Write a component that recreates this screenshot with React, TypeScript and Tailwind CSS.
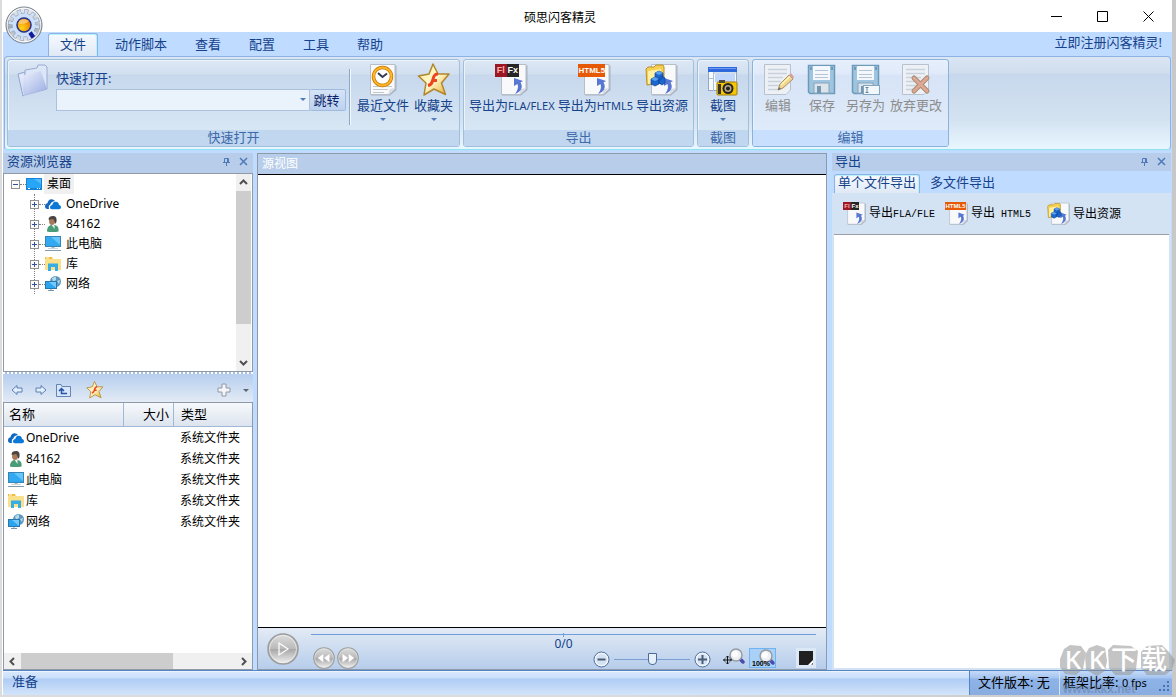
import React from "react";
import clsx from "clsx";

const UI = "font-['Noto_Sans','Noto_Sans_CJK_SC',sans-serif]";

/* ---------- small icons ---------- */

function OneDriveIcon() {
  return (
    <svg width="16" height="16" viewBox="0 0 16 16">
      <path d="M0 10.500C0 8.600 1 7.500 2.500 7.300C2.600 5 4.300 3.300 6.500 3.300C8 3.300 9.200 4 10 5.200C7.500 5 5.800 6.500 5.400 8.600C4 9 3.400 10.600 4 13H2.300C1 13 0 12 0 10.500Z" fill="#1068c2" />
      <path d="M5 11.500C5 10 6 9 7.300 9C7.600 7 9 5.800 10.800 5.800C12.600 5.800 13.800 7 14 8.900C15.300 9 16 10 16 11.200C16 12.500 15 13.200 14 13.200H6.800C5.700 13.200 5 12.500 5 11.500Z" fill="#0a78d7" />
    </svg>
  );
}

function UserIcon() {
  return (
    <svg width="16" height="16" viewBox="0 0 16 16">
      <path d="M2 15.500C2 11 4 9.500 7 8.500L10 9C13 10 14 12 13.500 15.500C10 16.500 5 16.500 2 15.500Z" fill="#4a9c78" />
      <path d="M6 8L9.500 13L9.500 8Z" fill="#eef3ef" />
      <ellipse cx="7" cy="5" rx="3" ry="4" fill="#a87a5a" />
      <path d="M3.500 3.500C3.500 1 5.500 0 8 0C11 0 12 2 11.500 6L10 8C9.500 6 9.500 4 8 3C6 3.500 4.500 4 3.500 3.500Z" fill="#4a4543" />
    </svg>
  );
}

function DesktopIcon() {
  return (
    <svg width="16" height="16" viewBox="0 0 16 16">
      <rect x="0" y="2" width="16" height="12" fill="#1683d8" />
      <rect x="1" y="3" width="14" height="9" fill="#27a5f7" />
      <path d="M8 3H15V8Z" fill="#53bbfb" />
      <path d="M2 12.500H4M11 12.500H12M13 12.500H14" stroke="#fff" />
    </svg>
  );
}

function ComputerIcon() {
  return (
    <svg width="16" height="16" viewBox="0 0 16 16">
      <rect x="0.500" y="0.500" width="15" height="10" fill="#31a8f0" stroke="#3784b5" />
      <path d="M6 1H15V9Z" fill="#66c5fa" />
      <path d="M8 11V13" stroke="#a5b5c4" strokeWidth="3" />
      <path d="M0 14.500H16" stroke="#8298ad" />
      <path d="M3 12.500H13" stroke="#cbd6df" />
    </svg>
  );
}

function LibraryIcon() {
  return (
    <svg width="16" height="16" viewBox="0 0 16 16">
      <path d="M0 1H7L8.500 3H16V14H0Z" fill="#fbe08c" />
      <path d="M0 1H7V3H0Z" fill="#f0bd3c" />
      <path d="M1 2H4" stroke="#fff" />
      <path d="M3 15V7.500H13V15H10V11H6V15Z" fill="#36aee5" />
    </svg>
  );
}

function NetworkIcon() {
  return (
    <svg width="16" height="16" viewBox="0 0 16 16">
      <circle cx="10.500" cy="5.500" r="5.500" fill="#5c97bd" />
      <path d="M7 2L11 0.500L11 4L8 6ZM12 5L15 4L14 8Z" fill="#b6d9ea" />
      <rect x="0.500" y="5.500" width="11" height="7" fill="#2ba4f0" stroke="#2878b0" />
      <path d="M4 6H11V12Z" fill="#71cafb" />
      <path d="M3 14.500H9M6 13V14" stroke="#7895ad" />
    </svg>
  );
}

function PinIcon() {
  return (
    <svg width="9" height="9" viewBox="0 0 9 9" fill="none" stroke="#4f79b8">
      <path d="M2.500 5.500V1.500H6.500V5.500M5.500 1.500V5M1 5.500H8M4.500 6V9" />
    </svg>
  );
}

function CloseIcon() {
  return (
    <svg width="9" height="9" viewBox="0 0 9 9" fill="none" stroke="#4f79b8" strokeWidth="1.500">
      <path d="M1 1L8 8M8 1L1 8" />
    </svg>
  );
}

function Chevron({ dir }: { dir: "up" | "down" | "left" | "right" }) {
  const d = {
    up: "M1 6L4.500 2.500L8 6",
    down: "M1 3L4.500 6.500L8 3",
    left: "M6 1L2.500 4.500L6 8",
    right: "M3 1L6.500 4.500L3 8",
  }[dir];
  return (
    <svg width="9" height="9" viewBox="0 0 9 9" fill="none" stroke="#505050" strokeWidth="2">
      <path d={d} />
    </svg>
  );
}

function Caret({ color = "#4f79b8" }: { color?: string }) {
  return (
    <svg width="6" height="3" viewBox="0 0 6 3">
      <path d="M0 0H6L3 3Z" fill={color} />
    </svg>
  );
}

/* ---------- ribbon icons ---------- */

function LogoIcon() {
  return (
    <svg width="38" height="38" viewBox="0 0 38 38">
      <defs>
        <linearGradient id="orb" x1="0" y1="0" x2="0" y2="1">
          <stop offset="0" stopColor="#eceef0" />
          <stop offset="0.450" stopColor="#c3c8ce" />
          <stop offset="0.550" stopColor="#9fa6af" />
          <stop offset="1" stopColor="#eef1f4" />
        </linearGradient>
        <radialGradient id="amber" cx="0.350" cy="0.700" r="0.700">
          <stop offset="0" stopColor="#ffd61a" />
          <stop offset="1" stopColor="#f07a00" />
        </radialGradient>
      </defs>
      <circle cx="19" cy="19" r="18" fill="url(#orb)" stroke="#747b84" />
      <circle cx="19" cy="19" r="16.800" fill="none" stroke="#fff" opacity="0.800" />
      {/* gear: twelve teeth round a solid ring */}
      <circle cx="19" cy="19" r="13" fill="none" stroke="#8794a6" strokeWidth="6" strokeDasharray="3.600 3.207" />
      <circle cx="19" cy="19" r="9.500" fill="none" stroke="#8794a6" strokeWidth="5" />
      <circle cx="19" cy="19" r="12.500" fill="none" stroke="#cde0fa" strokeWidth="6" strokeDasharray="2.800 3.745" strokeDashoffset="-0.300" />
      <circle cx="19" cy="19" r="9.500" fill="none" stroke="#cde0fa" strokeWidth="4" />
      <circle cx="19" cy="19" r="7" fill="url(#amber)" stroke="#26348c" strokeWidth="1.500" />
      <path d="M14 15C16 12.500 21 12.500 24 15C21 18 17 18 14 18Z" fill="#ffe0a0" opacity="0.600" />
      <path d="M25 26.500L28.500 31.500" stroke="#101c9c" strokeWidth="4" />
    </svg>
  );
}

function OpenFolderIcon() {
  return (
    <svg width="32" height="34" viewBox="0 0 32 34">
      <defs>
        <linearGradient id="fold" x1="0" y1="0" x2="1" y2="1">
          <stop offset="0" stopColor="#f4f7ff" />
          <stop offset="1" stopColor="#8fa3de" />
        </linearGradient>
      </defs>
      <path d="M1 10L8 8L9 30L6 32Z" fill="#dce6f8" stroke="#92a5d0" />
      <path d="M8 6L20 4L21 1L28 1L30 3V25L8 31Z" fill="#dde6f7" stroke="#9aabd0" />
      <path d="M3 12L24 7L30 25L7 32Z" fill="url(#fold)" opacity="0.900" />
    </svg>
  );
}

function PaperShape({ x = 3 }: { x?: number }) {
  return (
    <g transform={`translate(${x} 0)`}>
      <path d="M1 1.500H26.500V26L20 31.500H1Z" fill="#8f99a6" opacity="0.600" />
      <path d="M0.500 0.500H25V25L19 30.500H0.500Z" fill="#f8f9fb" stroke="#b7bec8" />
      <path d="M25 24L18 30.500L20 25Z" fill="#d6dbe1" />
    </g>
  );
}

function RecentIcon() {
  return (
    <svg width="32" height="32" viewBox="0 0 32 32">
      <PaperShape />
      <path d="M6 25.500H21M6 28.500H17M6 22.500H25" stroke="#c2c7ce" />
      <circle cx="15.500" cy="12.500" r="9" fill="#fff" stroke="#c87800" strokeWidth="3.500" />
      <circle cx="15.500" cy="12.500" r="9" fill="none" stroke="#ffb727" strokeWidth="2" />
      <path d="M11 9L15.500 13L20 9.500" fill="none" stroke="#333c55" strokeWidth="2" />
    </svg>
  );
}

function StarIcon({ size = 34 }: { size?: number }) {
  return (
    <svg width={size} height={size} viewBox="0 0 34 34">
      <defs>
        <linearGradient id="gold" x1="0" y1="0" x2="1" y2="1">
          <stop offset="0" stopColor="#ffe98a" />
          <stop offset="0.500" stopColor="#fff8cf" />
          <stop offset="1" stopColor="#e9a91f" />
        </linearGradient>
      </defs>
      <path d="M16 1L21 11L32 11L24.500 20L28.500 31.500L17 26L7 32L9 20L1.500 13L12 11Z" fill="url(#gold)" stroke="#b08630" strokeWidth="1.500" strokeLinejoin="round" />
      <path d="M21 11C17 11 16.500 14 15.500 18C14.800 20.500 13.500 22 11 22.500M15 17.500H20" fill="none" stroke="#ee431f" strokeWidth="3" />
    </svg>
  );
}

function BlueArrow() {
  return <path d="M20 30C23 26 23.500 23 22.500 20L19 22V14L28 17L25.500 18.500C28.500 23 26 28 20 30Z" fill="#5877d2" />;
}

function ExportPage() {
  return (
    <>
      <PaperShape x={6} />
      <BlueArrow />
    </>
  );
}

function FlaIcon({ small = false }: { small?: boolean }) {
  return (
    <span className="relative block">
      <svg width={small ? 24 : 34} height={small ? 24 : 32} viewBox="0 0 34 32">
        <ExportPage />
      </svg>
      <span
        className={clsx(
          "absolute left-0 top-0 flex font-['Liberation_Sans',sans-serif] font-bold text-white",
          small ? "text-[6px] leading-[8px]" : "text-[9px] leading-[13px]"
        )}
      >
        <span className={clsx("bg-[#9c1724] text-center text-[#ffb0a8]", small ? "w-2" : "w-3")}>Fl</span>
        <span className={clsx("bg-[#262626] text-center", small ? "w-2" : "w-3")}>Fx</span>
      </span>
    </span>
  );
}

function HtmlIcon({ small = false }: { small?: boolean }) {
  return (
    <span className="relative block">
      <svg width={small ? 24 : 34} height={small ? 24 : 32} viewBox="0 0 34 32">
        <ExportPage />
      </svg>
      <span
        className={clsx(
          "absolute left-0 top-0 flex justify-center bg-[#e65a05] font-['Liberation_Sans',sans-serif] font-bold text-white",
          small ? "w-[21px] text-[6px] leading-[8px]" : "w-[27px] text-[8px] leading-[13px]"
        )}
      >
        HTML5
      </span>
    </span>
  );
}

function ResourceIcon({ small = false }: { small?: boolean }) {
  return (
    <svg width={small ? 24 : 34} height={small ? 24 : 32} viewBox="0 0 34 32">
      <ExportPage />
      <path d="M1 5L3 3H9L11 1H18L19 3V19L2 21Z" fill="#f4cf52" stroke="#b9912a" />
      <path d="M3 7L16 5V18L3 20Z" fill="#fff0a2" />
      <path d="M10 9L14 7L18 9V14L14 16L10 14ZM6 15L10 13L14 15V20L10 22L6 20ZM14 14L17 12L20 14V19L17 21L14 19Z" fill="#1c66cd" stroke="#0a459f" strokeWidth="0.700" />
      <path d="M10 9L14 7L18 9L14 11ZM6 15L10 13L14 15L10 17Z" fill="#5aa2ef" />
    </svg>
  );
}

function CaptureIcon() {
  return (
    <svg width="34" height="32" viewBox="0 0 34 32">
      <rect x="2.500" y="3.500" width="28" height="23" fill="#f6fbff" stroke="#9ba6ba" />
      <rect x="2" y="3" width="29" height="5" fill="#2d68dc" />
      <path d="M3 4.500H30" stroke="#719bf0" />
      <path d="M3 14.500H8M7.500 8V27M8 9H30" stroke="#aec0d8" />
      <rect x="9" y="10" width="20" height="8" fill="#c0d6fa" />
      <rect x="11" y="18" width="20" height="13" rx="1" fill="#f6c704" stroke="#a17c0e" />
      <rect x="13" y="16" width="6" height="3" fill="#4e4938" />
      <path d="M12 20H15V30H12Z" fill="#3a352a" />
      <circle cx="22" cy="24.500" r="5.500" fill="#27231d" />
      <circle cx="22" cy="24.500" r="3.500" fill="#b8a98a" />
      <circle cx="22" cy="24.500" r="2" fill="#222" />
    </svg>
  );
}

function TextPage() {
  return (
    <>
      <path d="M3.500 0.500H29.500V26L25 30.500H3.500Z" fill="#edf1f6" stroke="#b7c2ce" />
      <path d="M7 5.500H26M7 9.500H26M7 13.500H22M7 17.500H20M7 21.500H18M7 25.500H18" stroke="#c9d2dc" strokeWidth="1.500" />
    </>
  );
}

function EditIcon() {
  return (
    <svg width="34" height="32" viewBox="0 0 34 32">
      <TextPage />
      <path d="M17 26L19 20L28 11L32 15L22 24Z" fill="#f0d690" stroke="#a99263" />
      <path d="M28 11L30 9L33 13L32 15Z" fill="#d8a0a0" />
      <path d="M17 26L18 23L20 25Z" fill="#686868" />
      <path d="M20 21L29 12.500" stroke="#fff3bc" strokeWidth="1.500" />
    </svg>
  );
}

function SaveIcon({ as = false }: { as?: boolean }) {
  return (
    <svg width="32" height="32" viewBox="0 0 32 32">
      <path d="M2.500 1.500H28.500V29.500H4L2.500 28Z" fill="#9fc4e0" stroke="#6e9ab9" strokeWidth="1.500" />
      <rect x="7" y="2" width="17" height="14" fill="#f4f8fc" />
      <path d="M9 6.500H22M9 10.500H22M9 13.500H22" stroke="#b3c5d4" />
      <path d="M4 3H6V6H4ZM25 3H27V6H25Z" fill="#6e9ab9" />
      <rect x="8" y="19" width="15" height="10" fill="#dce3e9" stroke="#85a6bd" />
      <rect x="11" y="22" width="4" height="7" fill="#7397b3" />
      {as && (
        <>
          <rect x="13.500" y="21.500" width="16" height="9" fill="#f2f7fb" stroke="#84a6bd" />
          <path d="M15.500 23.500H18.500M17 23.500V28.500M15.500 28.500H18.500" stroke="#6389a5" />
        </>
      )}
    </svg>
  );
}

function DiscardIcon() {
  return (
    <svg width="34" height="32" viewBox="0 0 34 32">
      <TextPage />
      <path d="M15 14L28 27M28 14L15 27" stroke="#a98c78" strokeWidth="5" strokeLinecap="round" />
      <path d="M15 14L28 27M28 14L15 27" stroke="#dfa892" strokeWidth="3" strokeLinecap="round" />
    </svg>
  );
}

/* ---------- ribbon ---------- */

function RibbonButton({
  icon,
  children,
  caret = false,
  disabled = false,
  className,
}: {
  icon: React.ReactNode;
  children: React.ReactNode;
  caret?: boolean;
  disabled?: boolean;
  className?: string;
}) {
  return (
    <button
      disabled={disabled}
      className={clsx("flex shrink-0 flex-col items-center whitespace-nowrap pt-[3px]", disabled ? "text-[#8d8d8d]" : "text-[#15428b]", className)}
    >
      <span className="flex h-[34px] items-center">{icon}</span>
      <span className="leading-4">{children}</span>
      {caret && (
        <span className="mt-[5px]">
          <Caret />
        </span>
      )}
    </button>
  );
}

function RibbonGroup({
  title,
  active = false,
  className,
  children,
}: {
  title: string;
  active?: boolean;
  className?: string;
  children: React.ReactNode;
}) {
  return (
    <section
      className={clsx(
        "flex shrink-0 flex-col overflow-hidden rounded-[3px] border shadow-[inset_1px_1px_0_#eaf2fb]",
        active
          ? "border-[#8ab2dc] bg-[linear-gradient(#e6effc_0,#e0eafa_14px,#d7e4f7_15px,#dfebf9_72px)]"
          : "border-[#9fbfdc] bg-[linear-gradient(#dee8f5_0,#d1dfef_14px,#c7d8ed_15px,#d8e7f4_72px)]",
        className
      )}
    >
      <div className="flex flex-1">{children}</div>
      <h2 className={clsx("h-4 text-center leading-[14px] text-[#3e6aaa]", active ? "bg-[#c8dffd]" : "bg-[#c0d7ef]")}>{title}</h2>
    </section>
  );
}

const menuTabs = ["动作脚本", "查看", "配置", "工具", "帮助"];

function Ribbon() {
  return (
    <>
      <nav className="flex h-6 items-end bg-[#bfdbff] pl-[45px] text-[13px] text-[#15428b]">
        <a href="#file" className="h-[23px] w-[50px] rounded-t-[3px] border border-b-0 border-[#8db2e3] bg-[linear-gradient(#f6faff,#dfe9f5)] text-center leading-5 shadow-[inset_-1px_1px_0_#b8f1f8]">
          文件
        </a>
        <div className="flex flex-1 gap-7 pl-[17px] leading-[23px]">
          {menuTabs.map((t) => (
            <a key={t} href="#tab">
              {t}
            </a>
          ))}
        </div>
        <a href="#register" className="pr-2.5 leading-7">
          立即注册闪客精灵!
        </a>
      </nav>
      <div className="bg-[#bfdbff] px-px pb-[3px]">
        <div className="flex h-[94px] gap-[3px] rounded border border-[#8db2e3] border-b-[#8fe3f0] bg-[linear-gradient(#dbe6f4_0,#cfddec_16px,#c7d8ed_17px,#d3e2f0_62px,#e7f6ff_92px)] p-[2px] text-[13px]">
          <RibbonGroup title="快速打开" className="w-[453px]">
            <div className="flex pl-[9px] pt-1">
              <OpenFolderIcon />
              <div className="flex flex-col pl-[7px]">
                <label htmlFor="path" className="pt-1 leading-5 text-[#15428b]">
                  快速打开:
                </label>
                <div className="mt-px flex">
                  <div className="relative h-[22px] w-[254px] border border-[#abc1de] bg-[#eaf2fb]">
                    <input id="path" className="h-full w-full bg-transparent px-1 outline-none" />
                    <span className="absolute right-[3px] top-2 flex">
                      <Caret />
                    </span>
                  </div>
                  <button className="w-9 whitespace-nowrap rounded-[2px] border border-l-0 border-[#9ebbdf] bg-[linear-gradient(#d5e3f6,#bdd2ef)] pr-0.5 leading-[18px] text-[#0b1f6b]">跳转</button>
                </div>
              </div>
            </div>
            <div className="ml-[3px] mt-[9px] h-14 w-px bg-[#8aa8cf] shadow-[1px_0_0_#f3f8fd]" />
            <RibbonButton icon={<RecentIcon />} caret className="ml-[7px]">
              最近文件
            </RibbonButton>
            <RibbonButton icon={<StarIcon />} caret className="ml-[5px]">
              收藏夹
            </RibbonButton>
          </RibbonGroup>
          <RibbonGroup title="导出" className="w-[231px]">
            <RibbonButton icon={<FlaIcon />} className="ml-[5px]">
              导出为<span className="text-[11px]">FLA/FLEX</span>
            </RibbonButton>
            <RibbonButton icon={<HtmlIcon />} className="ml-[3px]">
              导出为<span className="text-[11px]">HTML5</span>
            </RibbonButton>
            <RibbonButton icon={<ResourceIcon />} className="ml-[3px]">
              导出资源
            </RibbonButton>
          </RibbonGroup>
          <RibbonGroup title="截图" className="w-[52px]">
            <RibbonButton icon={<CaptureIcon />} caret className="mx-auto">
              截图
            </RibbonButton>
          </RibbonGroup>
          <RibbonGroup title="编辑" active className="w-[197px]">
            <RibbonButton disabled icon={<EditIcon />} className="ml-2">
              编辑
            </RibbonButton>
            <RibbonButton disabled icon={<SaveIcon />} className="ml-[11px]">
              保存
            </RibbonButton>
            <RibbonButton disabled icon={<SaveIcon as />} className="ml-2">
              另存为
            </RibbonButton>
            <RibbonButton disabled icon={<DiscardIcon />} className="ml-[5px]">
              放弃更改
            </RibbonButton>
          </RibbonGroup>
        </div>
      </div>
    </>
  );
}

/* ---------- left side ---------- */

function PanelTitle({ children, className }: { children: React.ReactNode; className?: string }) {
  return (
    <header className={clsx("flex shrink-0 items-start gap-2 bg-[#b7cde9] pr-[5px] text-[13px] text-[#15428b]", className)}>
      <h2 className="flex-1 leading-4">{children}</h2>
      <button aria-label="pin" className="pt-1">
        <PinIcon />
      </button>
      <button aria-label="close" className="pt-1">
        <CloseIcon />
      </button>
    </header>
  );
}

const places = [
  { name: "OneDrive", icon: <OneDriveIcon /> },
  { name: "84162", icon: <UserIcon /> },
  { name: "此电脑", icon: <ComputerIcon /> },
  { name: "库", icon: <LibraryIcon /> },
  { name: "网络", icon: <NetworkIcon /> },
];

function Toggle({ open = false }: { open?: boolean }) {
  return (
    <button aria-label="expand">
      <svg width="9" height="9" viewBox="0 0 9 9" fill="none">
        <rect x="0.500" y="0.500" width="8" height="8" fill="#fafafa" stroke="#919191" />
        <path d={open ? "M2 4.500H7" : "M2 4.500H7M4.500 2V7"} stroke="#34509a" />
      </svg>
    </button>
  );
}

function Tree() {
  return (
    <div className="flex h-[199px] shrink-0 border border-[#8f9aa8] bg-white">
      <ul className="flex-1 text-xs text-black">
        <li>
          <div className="flex h-5 items-center pl-[7px]">
            <Toggle open />
            <span className="w-[6px] border-t border-dotted border-[#808080]" />
            <DesktopIcon />
            <span className="ml-0.5 bg-[#f0f0f0] px-[3px] leading-5">桌面</span>
          </div>
          <ul className="ml-[30px] border-l border-dotted border-[#808080]">
            {places.map((p) => (
              <li key={p.name} className="-ml-[5px] flex h-5 items-center">
                <Toggle />
                <span className="w-[6px] border-t border-dotted border-[#808080]" />
                {p.icon}
                <span className="ml-[5px] leading-5">{p.name}</span>
              </li>
            ))}
          </ul>
        </li>
      </ul>
      <div className="mr-px flex w-[15px] flex-col items-center bg-[#f0f0f0]">
        <button aria-label="up" className="flex h-[17px] items-center">
          <Chevron dir="up" />
        </button>
        <div className="h-[133px] w-full bg-[#cdcdcd]" />
        <button aria-label="down" className="mt-auto flex h-[17px] items-center">
          <Chevron dir="down" />
        </button>
      </div>
    </div>
  );
}

function FileToolbar() {
  return (
    <div className="flex h-[26px] shrink-0 items-center bg-[linear-gradient(#b9d0ef,#e3ebf5)] px-2 pt-0.5">
      <button aria-label="back">
        <svg width="12" height="12" viewBox="0 0 12 12">
          <path d="M1 6L6 1.500V4H11V8H6V10.500Z" fill="#e2effd" stroke="#5f7fb5" />
        </svg>
      </button>
      <button aria-label="forward" className="ml-3">
        <svg width="12" height="12" viewBox="0 0 12 12">
          <path d="M11 6L6 1.500V4H1V8H6V10.500Z" fill="#e2effd" stroke="#5f7fb5" />
        </svg>
      </button>
      <button aria-label="up folder" className="ml-[9px]">
        <svg width="15" height="14" viewBox="0 0 15 14">
          <path d="M0.500 13.500V1.500H5L6 3.500H14.500V13.500Z" fill="#d7e6fa" stroke="#6484b2" />
          <path d="M5.500 6V10.500H11M3 8L5.500 5.500L8 8" fill="none" stroke="#2451aa" strokeWidth="1.500" />
        </svg>
      </button>
      <button aria-label="favorite" className="ml-[15px]">
        <StarIcon size={18} />
      </button>
      <button aria-label="add" className="ml-auto">
        <svg width="14" height="14" viewBox="0 0 14 14">
          <path d="M5 1H9V5H13V9H9V13H5V9H1V5H5Z" fill="#f3f5f8" stroke="#929aa5" />
        </svg>
      </button>
      <button aria-label="more" className="-mr-1 ml-3">
        <Caret color="#5d6571" />
      </button>
    </div>
  );
}

function FileList() {
  return (
    <div className="flex min-h-0 flex-1 flex-col border border-[#8f9aa8] bg-white">
      <table className="w-full table-fixed border-separate border-spacing-0 text-xs text-black">
        <thead>
          <tr className="h-6 bg-[linear-gradient(#f7f9fb,#dbe3ee)] text-[13px] leading-4">
            <th className="w-[120px] border-b border-r border-[#9eb8d5] pb-0.5 pl-[5px] text-left font-normal">名称</th>
            <th className="w-[50px] border-b border-r border-[#9eb8d5] pb-0.5 pr-1 text-right font-normal">大小</th>
            <th className="border-b border-[#9eb8d5] pb-0.5 pl-[7px] text-left font-normal">类型</th>
          </tr>
        </thead>
        <tbody>
          {places.map((p) => (
            <tr key={p.name} className="h-[21px]">
              <td className="pl-1">
                <div className="flex items-center gap-[2px] leading-5">
                  {p.icon}
                  {p.name}
                </div>
              </td>
              <td />
              <td className="pl-[6px]">系统文件夹</td>
            </tr>
          ))}
        </tbody>
      </table>
      <div className="mt-auto flex h-4 items-center bg-[#f0f0f0] px-1">
        <button aria-label="left">
          <Chevron dir="left" />
        </button>
        <div className="ml-1 h-full w-[152px] bg-[#cdcdcd]" />
        <button aria-label="right" className="ml-auto">
          <Chevron dir="right" />
        </button>
      </div>
    </div>
  );
}

/* ---------- player ---------- */

function Orb({ size, children, label }: { size: number; children: React.ReactNode; label: string }) {
  return (
    <button aria-label={label} className="block">
      <svg width={size} height={size} viewBox="0 0 32 32">
        <defs>
          <linearGradient id={"g" + label} x1="0" y1="0" x2="0" y2="1">
            <stop offset="0" stopColor="#dedede" />
            <stop offset="0.500" stopColor="#b9b9b9" />
            <stop offset="0.510" stopColor="#a7a7a7" />
            <stop offset="1" stopColor="#f3f3f3" />
          </linearGradient>
        </defs>
        <circle cx="16" cy="16" r="15" fill={`url(#g${label})`} stroke="#9c9c9c" strokeWidth="1.500" />
        <circle cx="16" cy="16" r="13.500" fill="none" stroke="#f1f1f1" opacity="0.700" />
        {children}
      </svg>
    </button>
  );
}

function ZoomButton({ plus = false }: { plus?: boolean }) {
  return (
    <button aria-label={plus ? "zoom in" : "zoom out"}>
      <svg width="17" height="17" viewBox="0 0 17 17">
        <circle cx="8.500" cy="8.500" r="7.500" fill="#eff5fc" stroke="#4e6c99" />
        <circle cx="8.500" cy="8.500" r="5.500" fill="#d5e2f2" />
        <path d={plus ? "M4 8.500H13M8.500 4V13" : "M4.500 8.500H12.500"} stroke="#4a5c78" strokeWidth="2" />
      </svg>
    </button>
  );
}

function Lens() {
  return (
    <>
      <path d="M17 11L20 14" stroke="#4a4cb0" strokeWidth="3.500" strokeLinecap="round" />
      <circle cx="13" cy="7" r="6" fill="#eef1f3" stroke="#969ca3" strokeWidth="1.500" />
      <circle cx="12" cy="6" r="3" fill="#fff" />
    </>
  );
}

function Player() {
  return (
    <div className="flex h-[41px] shrink-0 bg-[linear-gradient(#e3ebf5,#b6cdeb)]">
      <div className="pl-[9px] pt-[5px]">
        <Orb size={32} label="play">
          <path d="M12 10L21 16L12 22Z" fill="none" stroke="#fff" strokeWidth="1.200" />
        </Orb>
      </div>
      <div className="flex flex-1 flex-col pl-3 pr-[10px]">
        <input
          type="range"
          aria-label="frame"
          className="mt-1.5 h-1 w-full appearance-none bg-transparent [&::-webkit-slider-runnable-track]:h-1 [&::-webkit-slider-runnable-track]:border-t [&::-webkit-slider-runnable-track]:border-[#6f9edb] [&::-webkit-slider-thumb]:-mt-0.5 [&::-webkit-slider-thumb]:h-1 [&::-webkit-slider-thumb]:w-px [&::-webkit-slider-thumb]:appearance-none [&::-webkit-slider-thumb]:bg-[#6f9edb]"
        />
        <div className="grid flex-1 grid-cols-[1fr_auto_1fr] text-[#15428b]">
          <div className="flex items-end gap-0.5 pl-0.5">
            <Orb size={22} label="rewind">
              <path d="M15 10V22L7 16ZM24 10V22L16 16Z" fill="#fff" />
            </Orb>
            <Orb size={22} label="forward">
              <path d="M8 10V22L16 16ZM17 10V22L25 16Z" fill="#fff" />
            </Orb>
          </div>
          <span className="font-['Noto_Sans',sans-serif] text-xs leading-3">0/0</span>
          <div className="flex items-end justify-end pb-px">
            <div className="flex h-[18px] shrink-0 items-center">
              <ZoomButton />
              <input
                type="range"
                aria-label="zoom"
                className="mx-1 h-[14px] w-[76px] appearance-none bg-transparent [&::-webkit-slider-runnable-track]:h-px [&::-webkit-slider-runnable-track]:bg-[#7c9fcf] [&::-webkit-slider-thumb]:-mt-1.5 [&::-webkit-slider-thumb]:h-3 [&::-webkit-slider-thumb]:w-[9px] [&::-webkit-slider-thumb]:appearance-none [&::-webkit-slider-thumb]:rounded-b-[4px] [&::-webkit-slider-thumb]:border [&::-webkit-slider-thumb]:border-[#4e6c99] [&::-webkit-slider-thumb]:bg-[#e6f0fb]"
              />
              <ZoomButton plus />
            </div>
            <button aria-label="pan" className="ml-3 shrink-0">
              <svg width="22" height="20" viewBox="0 0 22 20">
                <Lens />
                <path d="M4.500 8V16M0.500 12H8.500M3 9.500L4.500 8L6 9.500M3 14.500L4.500 16L6 14.500M2 10.500L0.500 12L2 13.500M7 10.500L8.500 12L7 13.500" fill="none" stroke="#111" />
              </svg>
            </button>
            <button className="relative ml-1 h-5 w-[27px] shrink-0 border border-[#6fb3f0] bg-[#a9d0f7]">
              <svg width="24" height="18" viewBox="0 0 24 18" className="ml-[3px]">
                <Lens />
              </svg>
              <span className="absolute bottom-0 left-0.5 font-['Liberation_Sans',sans-serif] text-[7px] font-bold leading-[7px] text-black">100%</span>
            </button>
            <button aria-label="background" className="ml-5 flex h-5 w-5 shrink-0 items-center justify-center bg-[#dce8f5]">
              <svg width="14" height="14" viewBox="0 0 14 14">
                <rect width="14" height="14" fill="#202020" />
                <path d="M14 9V14H9Z" fill="#fff" />
                <path d="M12 13.500H14V12Z" fill="#202020" />
              </svg>
            </button>
          </div>
        </div>
      </div>
    </div>
  );
}

/* ---------- right side ---------- */

function ExportPanel() {
  return (
    <aside className="flex w-[339px] shrink-0 flex-col bg-[#bfdbff]">
      <PanelTitle className="h-[18px] pl-[3px]">导出</PanelTitle>
      <div className="flex h-[22px] shrink-0 items-end gap-2.5 pl-0.5 text-[13px] text-[#15428b]">
        <button className="flex h-[19px] whitespace-nowrap rounded-t-[3px] border border-b-0 border-[#8db2e3] bg-[linear-gradient(#f6faff,#dfe9f5)] px-[3px] leading-[14px] shadow-[inset_-1px_1px_0_#b8f1f8]">
          单个文件导出
        </button>
        <button className="flex h-[19px] leading-4">多文件导出</button>
      </div>
      <div className="flex min-h-0 flex-1 flex-col bg-[#d3e3f3] px-0.5 pb-0.5">
        <div className="flex h-[41px] shrink-0 items-center pl-[9px] text-xs text-black">
          <button className="flex items-center gap-[2px] whitespace-nowrap">
            <FlaIcon small />
            <span>
              导出<span className="font-['Liberation_Mono',monospace] text-[10px]">FLA/FLE</span>
            </span>
          </button>
          <button className="ml-2.5 flex items-center gap-[2px] whitespace-nowrap">
            <HtmlIcon small />
            <span>
              导出<span className="font-['Liberation_Mono',monospace] text-[10px]"> HTML5</span>
            </span>
          </button>
          <button className="ml-4 flex items-center gap-[2px] whitespace-nowrap">
            <ResourceIcon small />
            <span>导出资源</span>
          </button>
        </div>
        <div className="flex-1 border-t border-[#9a9fa6] bg-white" />
      </div>
    </aside>
  );
}

function Watermark() {
  return (
    <div className="pointer-events-none absolute bottom-0 right-0 h-[54px] w-[113px]">
      <svg width="117" height="54" viewBox="0 0 117 54" className="absolute left-0 top-0" fill="#959595" opacity="0.550">
        <path d="M1 18L5 8L11 4L22 5L27 12L24 28L17 34L6 33L1 26Z" />
        <path d="M26 14L30 7L38 4L46 7L48 20L46 30L38 35L27 29Z" />
        <path d="M49 9L54 4L72 5L79 10L77 29L71 34L56 34L50 27Z" />
        <path d="M82 11L88 5L103 4L110 11L116 19L113 29L106 34L88 34L82 27Z" />
      </svg>
      <div className="absolute left-0.5 top-0.5 flex text-[26px] font-medium leading-8 text-white">
        <span className="w-6 text-center">K</span>
        <span className="w-6 text-center">K</span>
        <span className="w-[30px] text-center">下</span>
        <span className="w-[30px] text-center">载</span>
      </div>
      <span className="absolute bottom-0 left-1 font-['Liberation_Sans',sans-serif] text-xs font-bold leading-3 text-[#64789a]/50">www.kkx.net</span>
    </div>
  );
}

function StatusBar() {
  return (
    <footer className="flex h-[25px] shrink-0 border-t border-[#5585c4] bg-[linear-gradient(#fff_0,#d9e8fc_1px,#c9dffb_7px,#afccf5_8px,#d3e4fa_24px)] text-[13px]">
      <span className="flex-1 pl-[9px] leading-5 text-[#15428b]">准备</span>
      <div className="flex w-[203px] whitespace-nowrap border-l border-[#5585c4] bg-[linear-gradient(#c4daf8_0,#a5c4ef_7px,#8db3e8_8px,#8aade0_24px)] leading-[22px] text-black">
        <span className="w-[90px] border-r border-[#d3e3fa] pl-2">文件版本: 无</span>
        <span className="pl-[3px]">
          框架比率: <span className="text-[11px]">0 fps</span>
        </span>
        <svg width="12" height="12" viewBox="0 0 12 12" className="ml-auto mr-px mt-[10px]" fill="#4673b5">
          <path d="M8 0H10V2H8ZM4 4H6V6H4ZM8 4H10V6H8ZM0 8H2V10H0ZM4 8H6V10H4ZM8 8H10V10H8Z" />
        </svg>
      </div>
    </footer>
  );
}

function TitleBar() {
  return (
    <header className="flex h-8 shrink-0 items-center bg-white text-xs text-black">
      <h1 className="flex-1 pl-[66px] pt-[3px] text-center">硕思闪客精灵</h1>
      <div className="flex items-center justify-end gap-[35px] pr-[18px]">
        {["M0 5.500H11", "M0.500 0.500H10.500V10.500H0.500Z", "M0.500 0.500L10.500 10.500M10.500 0.500L0.500 10.500"].map((d) => (
          <button key={d} aria-label="window">
            <svg width="11" height="11" viewBox="0 0 11 11" fill="none" stroke="#000">
              <path d={d} />
            </svg>
          </button>
        ))}
      </div>
    </header>
  );
}

export default function App() {
  return (
    <div className={clsx(UI, "h-screen bg-[linear-gradient(90deg,#dcdcdc_50%,#c8c8c8)] pb-0.5 pl-0.5 pr-1 [&_svg]:block")}>
      <div className="relative flex h-full flex-col border-l border-white bg-[#bfdbff]">
        <TitleBar />
        <Ribbon />
        <span className="absolute left-[2px] top-[6px]">
          <LogoIcon />
        </span>
        <main className="flex min-h-0 flex-1 border-r border-[#bfdbff]">
          <div className="flex w-[250px] shrink-0 flex-col">
            <PanelTitle className="h-5 pl-1">资源浏览器</PanelTitle>
            <Tree />
            <div className="h-1 shrink-0 border-b-2 border-[#b9d0ef] bg-[repeating-linear-gradient(90deg,#fff_0,#fff_2px,#a9bfdf_2px,#a9bfdf_4px)]" />
            <FileToolbar />
            <FileList />
          </div>
          <div className="ml-1 flex min-w-0 flex-1 flex-col border border-[#8f9aa8] bg-white">
            <h2 className="h-[21px] shrink-0 border-b border-black bg-[#b7cde9] pl-1 text-xs leading-[19px] text-white">源视图</h2>
            <div className="flex-1 border-b border-black" />
            <Player />
          </div>
          <div className="w-[5px] shrink-0" />
          <ExportPanel />
        </main>
        <StatusBar />
        <Watermark />
      </div>
    </div>
  );
}
